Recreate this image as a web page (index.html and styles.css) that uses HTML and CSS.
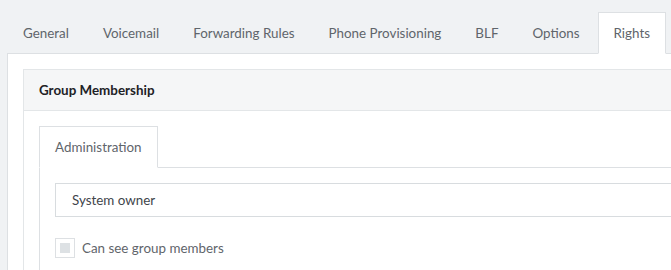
FILE: index.html
```html
<!DOCTYPE html>
<html lang="en">
<head>
    <meta charset="UTF-8">
    <title>Extension - Rights</title>
    <link rel="stylesheet" href="styles.css">
</head>
<body>
    <div class="page">
        <ul class="tabs">
            <li><a href="#">General</a></li>
            <li><a href="#">Voicemail</a></li>
            <li><a href="#">Forwarding Rules</a></li>
            <li><a href="#">Phone Provisioning</a></li>
            <li><a href="#">BLF</a></li>
            <li><a href="#">Options</a></li>
            <li class="active"><a href="#">Rights</a></li>
        </ul>

        <div class="tab-panel">
            <div class="box">
                <div class="box-header">Group Membership</div>
                <div class="box-body">
                    <ul class="tabs">
                        <li class="active"><a href="#">Administration</a></li>
                    </ul>
                    <div class="tab-pane">
                        <div class="select">System owner</div>
                        <label class="check">
                            <span class="check-box"><span class="check-mark"></span></span>
                            Can see group members
                        </label>
                    </div>
                </div>
            </div>
        </div>
    </div>
</body>
</html>
```

FILE: styles.css
```css
html, body {
    margin: 0;
    overflow: hidden;
}
body {
    font-family: Lato, "Liberation Sans", sans-serif;
    font-size: 13.4px;
    line-height: 20px;
    color: #5f656b;
    background: #f0f2f4;
}
.page {
    padding: 12px 0 0 7px;
    width: 720px;
}
.tabs {
    list-style: none;
    margin: 0;
    padding: 0;
    display: flex;
    border-bottom: 1px solid #dde0e3;
}
.tabs li {
    margin-bottom: -1px;
}
.tabs a {
    display: block;
    margin-right: 2px;
    padding: 10px 15px;
    border: 1px solid transparent;
    color: #5f656b;
    text-decoration: none;
}
.tabs li.active a {
    background: #fff;
    border-color: #dde0e3;
    border-bottom-color: #fff;
}
.tab-panel {
    background: #fff;
    border: 1px solid #dde0e3;
    border-top: none;
    padding: 15px;
    height: 300px;
}
.box {
    border: 1px solid #e3e6e8;
    height: 100%;
}
.box-header {
    background: #f5f6f7;
    border-bottom: 1px solid #e3e6e8;
    padding: 10px 15px;
    font-weight: bold;
    color: #1e2226;
}
.box-body {
    padding: 15px;
}
.tab-pane {
    border-left: 1px solid #dde0e3;
    padding: 15px;
    height: 200px;
}
.select {
    height: 32px;
    line-height: 32px;
    border: 1px solid #d8dcdf;
    padding: 0 16px;
    color: #3f454b;
}
.check {
    display: flex;
    align-items: center;
    gap: 7px;
    margin-top: 21px;
    color: #5f656b;
}
.check-box {
    width: 18px;
    height: 18px;
    border: 1px solid #dde0e3;
    display: flex;
    align-items: center;
    justify-content: center;
}
.check-mark {
    width: 10px;
    height: 10px;
    background: #dde1e4;
}
```
